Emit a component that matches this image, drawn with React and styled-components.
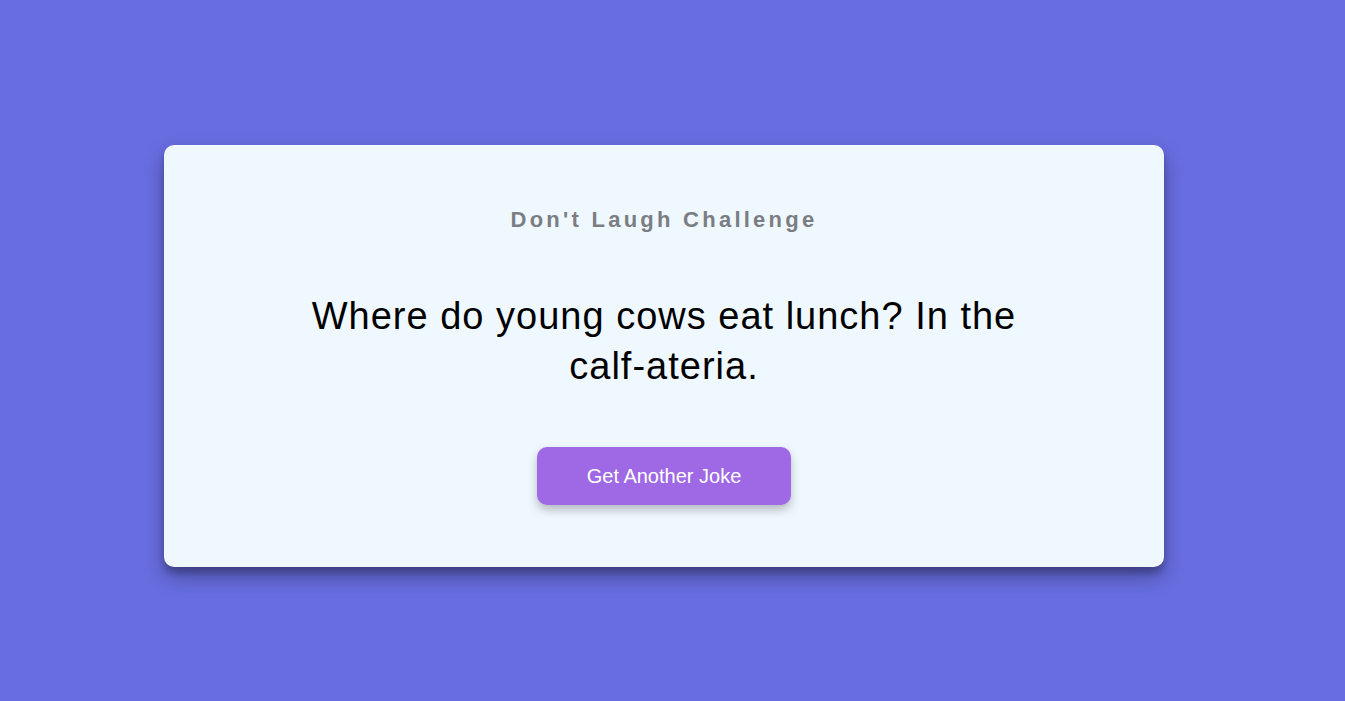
import React from "react";
import styled, { createGlobalStyle } from "styled-components";

const GlobalStyle = createGlobalStyle`
  html, body {
    margin: 0;
    padding: 0;
    background: #686de0;
    font-family: "Liberation Sans", Arial, sans-serif;
  }
  * {
    box-sizing: border-box;
  }
`;

export default function App() {
  return (
    <>
      <GlobalStyle />
      <Page>
        <Card>
          <Title>Don't Laugh Challenge</Title>
          <Joke>Where do young cows eat lunch? In the calf-ateria.</Joke>
          <Button>Get Another Joke</Button>
        </Card>
      </Page>
    </>
  );
}

const Page = styled.div`
  min-height: 100vh;
  padding: 11px 17px 0 0;
  display: flex;
  align-items: center;
  justify-content: center;
`;

const Card = styled.div`
  width: 1000px;
  padding: 62px 50px;
  display: flex;
  flex-direction: column;
  align-items: center;
  text-align: center;
  background-color: #f0f8ff;
  border-radius: 10px;
  box-shadow: 0 10px 20px rgba(0, 0, 0, 0.3), 0 6px 6px rgba(0, 0, 0, 0.2);
`;

const Title = styled.h3`
  margin: 0;
  font-size: 22px;
  line-height: 25px;
  font-weight: 700;
  letter-spacing: 3.25px;
  color: #7a7e83;
`;

const Joke = styled.p`
  margin: 59px 0 56px;
  max-width: 730px;
  font-size: 38px;
  line-height: 50px;
  letter-spacing: 1px;
  color: #000;
`;

const Button = styled.button`
  padding: 17px 50px;
  border: none;
  border-radius: 10px;
  background-color: #9f68e4;
  color: #fff;
  font-family: inherit;
  font-size: 20px;
  line-height: 24px;
  cursor: pointer;
  box-shadow: 0 5px 10px rgba(0, 0, 0, 0.25);
`;
